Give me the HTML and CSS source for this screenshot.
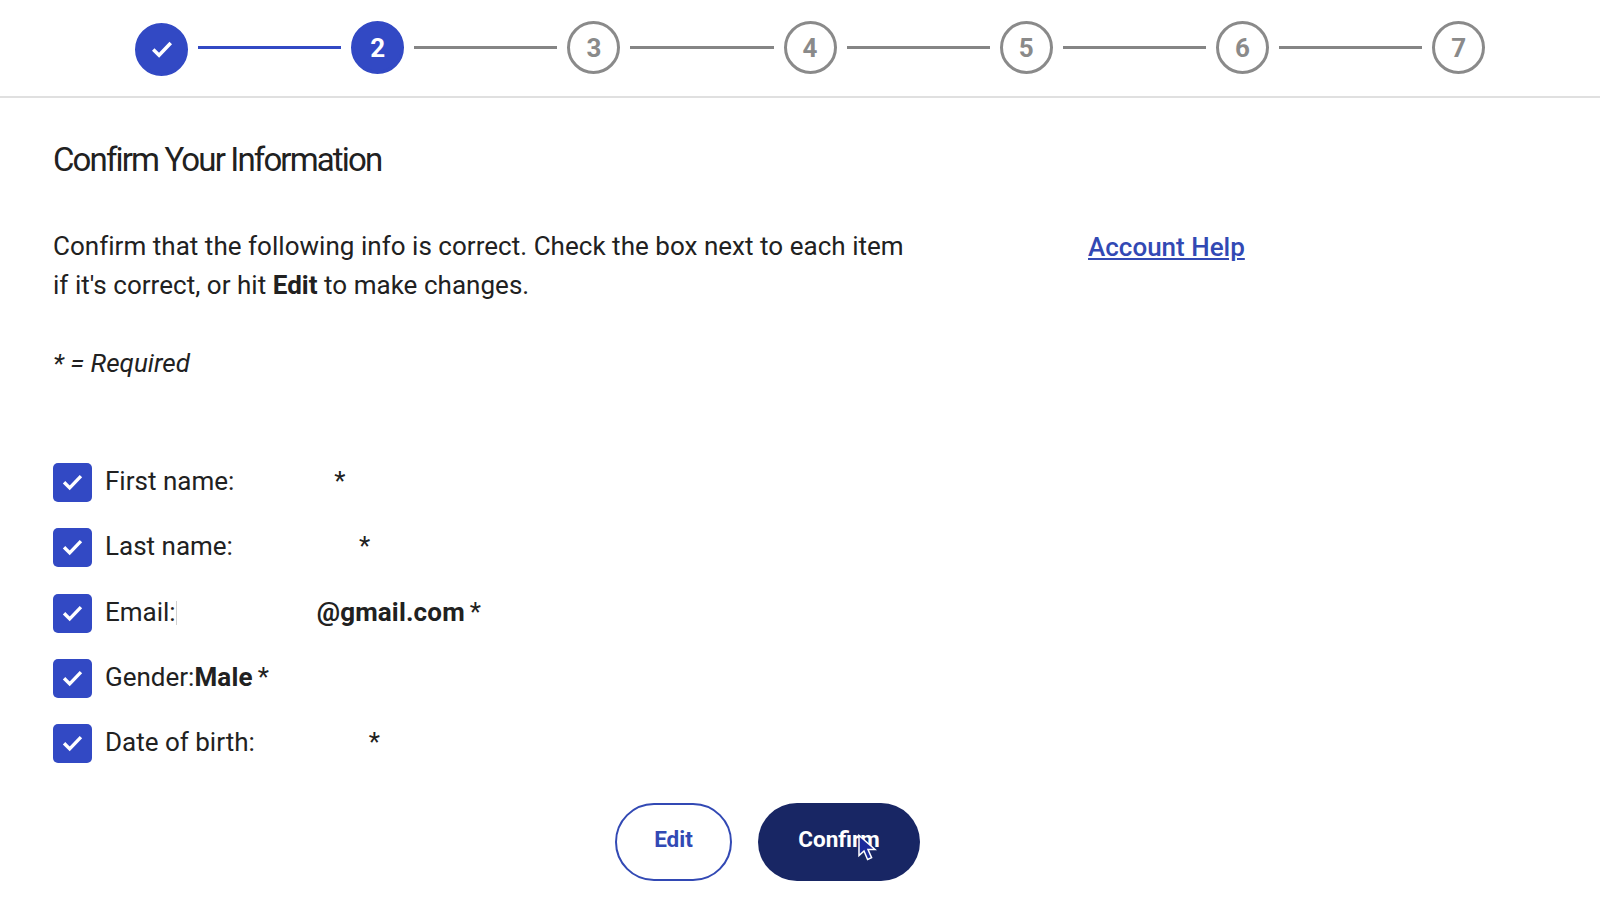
FILE: index.html
```html
<!DOCTYPE html>
<html lang="en">
<head>
<meta charset="utf-8">
<title>Confirm Your Information</title>
<link rel="stylesheet" href="styles.css">
</head>
<body>
<header class="stepper">
  <span class="step active done"><svg class="step-check" viewBox="0 0 24 24"><path d="M4.500 11.500l5 5 10-10.500"/></svg></span>
  <span class="line active"></span>
  <span class="step active">2</span>
  <span class="line"></span>
  <span class="step">3</span>
  <span class="line"></span>
  <span class="step">4</span>
  <span class="line"></span>
  <span class="step">5</span>
  <span class="line"></span>
  <span class="step">6</span>
  <span class="line"></span>
  <span class="step">7</span>
</header>
<main class="content">
  <h1 class="title">Confirm Your Information</h1>
  <div class="intro">
    <p class="intro-text">Confirm that the following info is correct. Check the box next to each item<br>if it's correct, or hit <b>Edit</b> to make changes.</p>
    <a class="help" href="#">Account Help</a>
  </div>
  <p class="required">* = Required</p>
  <ul class="fields">
    <li class="field"><span class="box"><svg viewBox="0 0 24 24"><path d="M4.500 11.800l5 5 10-10.500"/></svg></span><span class="label">First name:</span><span class="redact r1"></span><span class="star">*</span></li>
    <li class="field"><span class="box"><svg viewBox="0 0 24 24"><path d="M4.500 11.800l5 5 10-10.500"/></svg></span><span class="label">Last name:</span><span class="redact r2"></span><span class="star">*</span></li>
    <li class="field"><span class="box"><svg viewBox="0 0 24 24"><path d="M4.500 11.800l5 5 10-10.500"/></svg></span><span class="label">Email:</span><span class="redact r3"></span><b class="value">@gmail.com</b><span class="star near">*</span></li>
    <li class="field"><span class="box"><svg viewBox="0 0 24 24"><path d="M4.500 11.800l5 5 10-10.500"/></svg></span><span class="label">Gender:</span><b class="value">Male</b><span class="star near">*</span></li>
    <li class="field"><span class="box"><svg viewBox="0 0 24 24"><path d="M4.500 11.800l5 5 10-10.500"/></svg></span><span class="label">Date of birth:</span><span class="redact r4"></span><span class="star">*</span></li>
  </ul>
  <div class="actions">
    <button class="btn btn-outline" type="button">Edit</button>
    <button class="btn btn-solid" type="button">Confirm<svg class="cursor" viewBox="0 0 20 28"><path d="M2 1.500v20l5-4.500 3.600 8.500 4-1.800-3.600-8.200h7z"/></svg></button>
  </div>
</main>
</body>
</html>
```
FILE: styles.css
```css
* { box-sizing: border-box; }
html, body { margin: 0; padding: 0; }
body {
  width: 1600px;
  height: 912px;
  overflow: hidden;
  background: #fff;
  color: #212121;
  font-family: Roboto, "Liberation Sans", sans-serif;
}
.stepper {
  height: 98px;
  padding: 21px 0 0 135px;
  border-bottom: 2px solid #e0e0e0;
  display: flex;
  align-items: flex-start;
  gap: 10px;
}
.step {
  width: 53px;
  height: 53px;
  flex: none;
  border: 3px solid #8a8a8a;
  border-radius: 50%;
  display: flex;
  align-items: center;
  justify-content: center;
  color: #8a8a8a;
  font-size: 26px;
  font-weight: 700;
}
.step.active {
  background: #3249c4;
  border-color: #3249c4;
  color: #fff;
}
.step.done { margin-top: 2px; }
.step-check { width: 28px; height: 28px; }
.step-check path, .box path {
  fill: none;
  stroke: #fff;
  stroke-width: 3;
}
.line {
  width: 143.200px;
  height: 3px;
  margin-top: 25px;
  background: #858585;
  flex: none;
}
.line.active { background: #3249c4; }
.content { padding: 0 53px; }
.title {
  margin: 40px 0 0;
  font-size: 33px;
  line-height: 44px;
  font-weight: 400;
  letter-spacing: -1.860px;
}
.intro {
  margin-top: 45px;
  display: flex;
  align-items: flex-start;
}
.intro-text {
  width: 1035px;
  margin: 0;
  font-size: 26px;
  line-height: 39px;
  letter-spacing: 0.030px;
}
.help {
  margin-top: 1px;
  font-size: 26px;
  line-height: 39px;
  font-weight: 500;
  color: #3249b4;
}
.required {
  margin: 39px 0 0;
  font-size: 26px;
  line-height: 39px;
  font-style: italic;
  letter-spacing: 0.030px;
}
.fields {
  list-style: none;
  margin: 80px 0 0;
  padding: 0;
  display: flex;
  flex-direction: column;
  gap: 26.300px;
}
.field {
  height: 39px;
  display: flex;
  align-items: center;
  font-size: 26px;
  line-height: 39px;
}
.box {
  width: 39px;
  height: 39px;
  margin-right: 13px;
  border-radius: 5px;
  background: #3249c4;
  display: flex;
  align-items: center;
  justify-content: center;
}
.box svg { width: 27px; height: 27px; }
.label, .star, .value { position: relative; top: -1px; }
.value { font-weight: 700; letter-spacing: 0.150px; }
.star.near { margin-left: 5px; }
.redact { flex: none; }
.r1 { width: 100px; }
.r2 { width: 126px; }
.r3 {
  width: 141px;
  height: 24px;
  border-left: 1px solid #d0d0d0;
}
.r4 { width: 114px; }
.actions {
  margin-top: 40px;
  margin-left: 562px;
  display: flex;
  gap: 26px;
}
.btn {
  height: 78px;
  border-radius: 39px;
  font-family: inherit;
  font-size: 22.500px;
  font-weight: 700;
  padding: 0 0 6px;
  position: relative;
}
.btn-outline {
  width: 117px;
  background: #fff;
  border: 2px solid #3249b4;
  color: #3249b4;
}
.btn-solid {
  width: 162px;
  background: #182664;
  border: none;
  color: #fff;
}
.cursor {
  position: absolute;
  left: 99px;
  top: 31px;
  width: 20px;
  height: 28px;
}
.cursor path {
  fill: #1a2a9c;
  stroke: #fff;
  stroke-width: 1.500;
}
```
